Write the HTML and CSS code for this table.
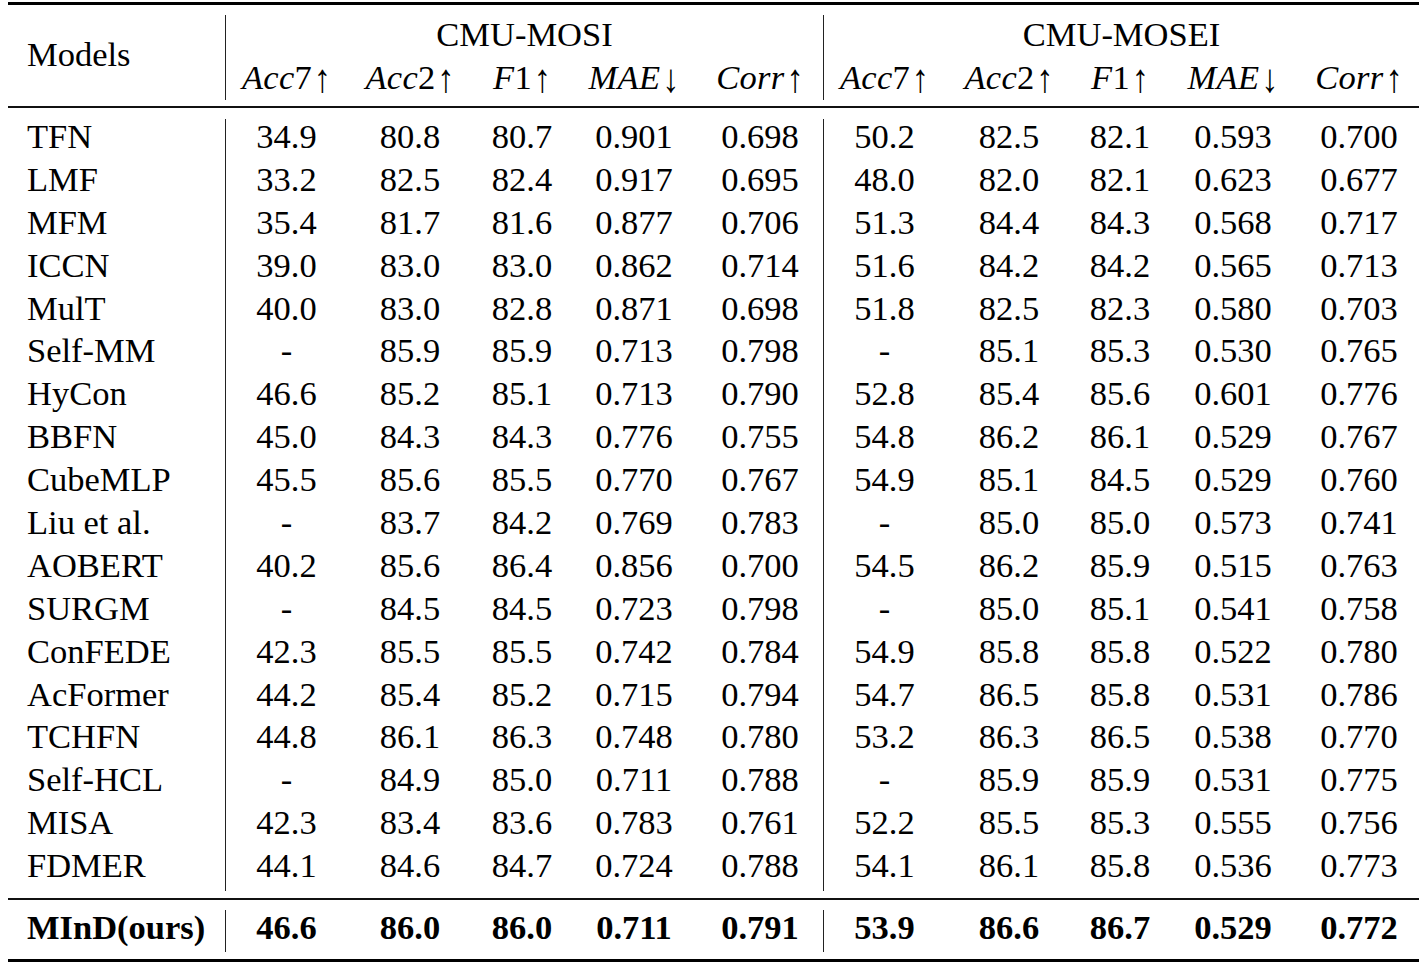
FILE: index.html
```html
<!DOCTYPE html>
<html>
<head>
<meta charset="utf-8">
<title>Results table</title>
<link rel="stylesheet" href="styles.css">
</head>
<body>
<div class="tbl">
  <div class="sec head">
    <div class="c name models">Models</div>
    <div class="c grp span5">CMU-MOSI</div>
    <div class="c grp span5">CMU-MOSEI</div>
    <div class="c m grp"><i>Acc</i>7<span class="ar">↑</span></div>
    <div class="c m"><i>Acc</i>2<span class="ar">↑</span></div>
    <div class="c m"><i>F</i>1<span class="ar">↑</span></div>
    <div class="c m"><i>MAE</i><span class="ar">↓</span></div>
    <div class="c m"><i>Corr</i><span class="ar">↑</span></div>
    <div class="c m grp"><i>Acc</i>7<span class="ar">↑</span></div>
    <div class="c m"><i>Acc</i>2<span class="ar">↑</span></div>
    <div class="c m"><i>F</i>1<span class="ar">↑</span></div>
    <div class="c m"><i>MAE</i><span class="ar">↓</span></div>
    <div class="c m"><i>Corr</i><span class="ar">↑</span></div>
  </div>
  <div class="sec body" id="body"></div>
  <div class="sec final" id="final"></div>
</div>
<script src="app.js"></script>
</body>
</html>
```
FILE: styles.css
```css
html, body {
  margin: 0;
  padding: 0;
  background: #fff;
}
body {
  font-family: "Liberation Serif", "Times New Roman", serif;
  font-size: 34.5px;
  color: #000;
}
.tbl {
  margin: 2px 0 0 8px;
  width: 1411px;
}
.sec {
  display: grid;
  grid-template-columns: 217px 122px 126px 98px 126px 126px 122px 128px 94px 132px 120px;
}
.head {
  border-top: 3px solid #000;
  border-bottom: 2px solid #111;
  padding: 10px 0 6px;
  grid-template-rows: 44px 41px;
}
.body {
  border-bottom: 2px solid #111;
  padding: 11px 0 7px;
  grid-auto-rows: 42.9px;
}
.final {
  border-bottom: 3px solid #000;
  padding: 10px 0 7px;
  grid-auto-rows: 42px;
  font-weight: bold;
}
.c {
  text-align: center;
  line-height: 36px;
  white-space: nowrap;
}
.body .c,
.final .c {
  line-height: 35px;
}
.name {
  text-align: left;
  padding-left: 19px;
}
.models {
  grid-row: span 2;
  padding-top: 21px;
}
.span5 {
  grid-column: span 5;
  padding-top: 1px;
}
.grp {
  border-left: 1px solid #222;
}
.m i {
  letter-spacing: 0.3px;
}
.ar {
  display: inline-block;
  font-style: normal;
  margin-left: 2px;
  transform: translateY(2px) scaleY(1.15);
  transform-origin: 50% 70%;
}
```
FILE: app.js
```js
var rows = [
  ["TFN","34.9","80.8","80.7","0.901","0.698","50.2","82.5","82.1","0.593","0.700"],
  ["LMF","33.2","82.5","82.4","0.917","0.695","48.0","82.0","82.1","0.623","0.677"],
  ["MFM","35.4","81.7","81.6","0.877","0.706","51.3","84.4","84.3","0.568","0.717"],
  ["ICCN","39.0","83.0","83.0","0.862","0.714","51.6","84.2","84.2","0.565","0.713"],
  ["MulT","40.0","83.0","82.8","0.871","0.698","51.8","82.5","82.3","0.580","0.703"],
  ["Self-MM","-","85.9","85.9","0.713","0.798","-","85.1","85.3","0.530","0.765"],
  ["HyCon","46.6","85.2","85.1","0.713","0.790","52.8","85.4","85.6","0.601","0.776"],
  ["BBFN","45.0","84.3","84.3","0.776","0.755","54.8","86.2","86.1","0.529","0.767"],
  ["CubeMLP","45.5","85.6","85.5","0.770","0.767","54.9","85.1","84.5","0.529","0.760"],
  ["Liu et al.","-","83.7","84.2","0.769","0.783","-","85.0","85.0","0.573","0.741"],
  ["AOBERT","40.2","85.6","86.4","0.856","0.700","54.5","86.2","85.9","0.515","0.763"],
  ["SURGM","-","84.5","84.5","0.723","0.798","-","85.0","85.1","0.541","0.758"],
  ["ConFEDE","42.3","85.5","85.5","0.742","0.784","54.9","85.8","85.8","0.522","0.780"],
  ["AcFormer","44.2","85.4","85.2","0.715","0.794","54.7","86.5","85.8","0.531","0.786"],
  ["TCHFN","44.8","86.1","86.3","0.748","0.780","53.2","86.3","86.5","0.538","0.770"],
  ["Self-HCL","-","84.9","85.0","0.711","0.788","-","85.9","85.9","0.531","0.775"],
  ["MISA","42.3","83.4","83.6","0.783","0.761","52.2","85.5","85.3","0.555","0.756"],
  ["FDMER","44.1","84.6","84.7","0.724","0.788","54.1","86.1","85.8","0.536","0.773"]
];
var finalRow = ["MInD(ours)","46.6","86.0","86.0","0.711","0.791","53.9","86.6","86.7","0.529","0.772"];

function fill(container, data) {
  data.forEach(function (r) {
    r.forEach(function (v, i) {
      var d = document.createElement("div");
      d.className = "c" + (i === 0 ? " name" : "") + (i === 1 || i === 6 ? " grp" : "");
      d.textContent = v;
      container.appendChild(d);
    });
  });
}
fill(document.getElementById("body"), rows);
fill(document.getElementById("final"), [finalRow]);
```
